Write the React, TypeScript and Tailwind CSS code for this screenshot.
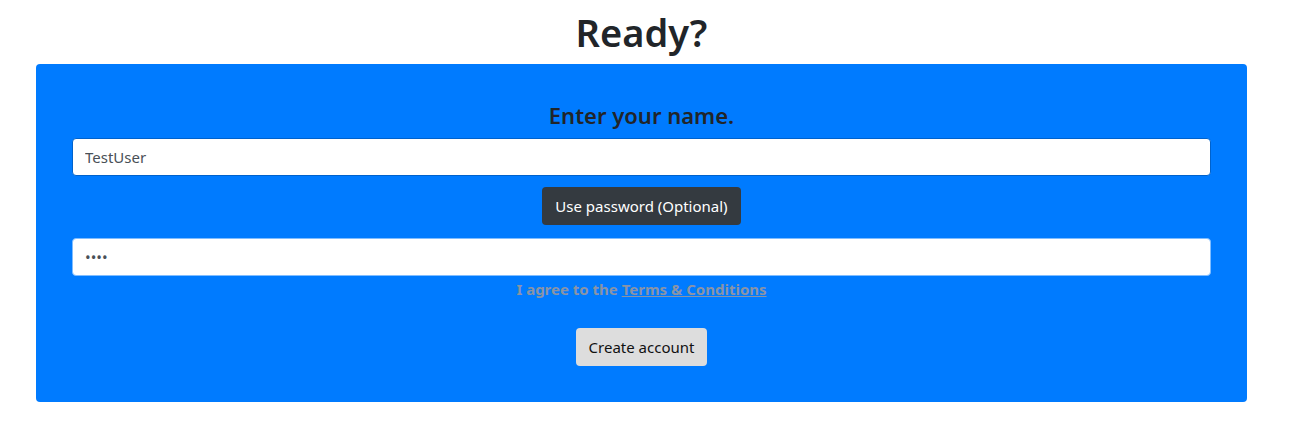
import * as React from "react";

/* Sign-up card — "Ready?" heading, name input, optional password, terms, submit */

const FONT = { fontFamily: '"Noto Sans", "Open Sans", Arial, sans-serif' };

export default function App() {
  const [name, setName] = React.useState("TestUser");
  const [pwd, setPwd] = React.useState("abcd");

  return (
    <div className="min-h-[435px] bg-white text-[#212529]" style={FONT}>
      <div className="ml-[36px] w-[1211px]">
        <h1 className="pt-2 pb-2 text-center text-[38px] font-semibold leading-[48px] text-[#212529]">
          Ready?
        </h1>

        <div className="rounded bg-[#007bff] px-9 pt-[37px] pb-[36px]">
          <h4 className="text-center text-[22px] font-semibold leading-[28px] text-[#212529]">
            Enter your name.
          </h4>

          <input
            value={name}
            onChange={(e) => setName(e.target.value)}
            className="mt-[9px] block h-[38px] w-full rounded border border-[#0062cc] bg-white px-3 text-[15px] text-[#495057] outline-none"
          />

          <div className="mt-[11px] flex justify-center">
            <button className="h-[38px] rounded bg-[#343a40] px-[13px] text-[15px] text-white">
              Use password (Optional)
            </button>
          </div>

          <input
            type="password"
            value={pwd}
            onChange={(e) => setPwd(e.target.value)}
            className="mt-[13px] block h-[38px] w-full rounded border border-[#80bdff] bg-white px-3 text-[15px] text-[#495057] outline-none"
          />

          <p className="mt-[2px] text-center text-[15px] font-bold leading-[22px] text-[#8a94a6]">
            I agree to the{" "}
            <a href="#terms" className="underline">
              Terms &amp; Conditions
            </a>
          </p>

          <div className="mt-[28px] flex justify-center">
            <button className="h-[38px] rounded bg-[#dddddd] px-[13px] text-[15px] text-[#111]">
              Create account
            </button>
          </div>
        </div>
      </div>
    </div>
  );
}
